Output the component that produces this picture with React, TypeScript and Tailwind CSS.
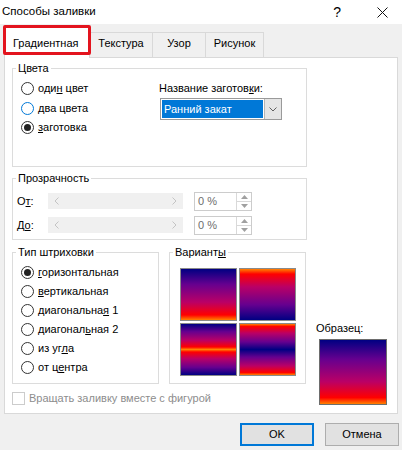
import type { ReactNode } from 'react';

const SUNSET =
  'bg-[linear-gradient(180deg,#000082_0%,#66008f_30%,#ba0066_65%,#ff0000_90%,#ff8200_100%)]';
const SUNSET_UP =
  'bg-[linear-gradient(0deg,#000082_0%,#66008f_30%,#ba0066_65%,#ff0000_90%,#ff8200_100%)]';
const SUNSET_MID =
  'bg-[linear-gradient(180deg,#000082_0%,#66008f_15%,#ba0066_32%,#ff0000_45%,#ff8200_50%,#ff0000_55%,#ba0066_68%,#66008f_85%,#000082_100%)]';
const SUNSET_EDGE =
  'bg-[linear-gradient(180deg,#ff8200_0%,#ff0000_5%,#ba0066_18%,#66008f_35%,#000082_50%,#66008f_65%,#ba0066_82%,#ff0000_95%,#ff8200_100%)]';

function Radio({ checked, hover, children }: { checked?: boolean; hover?: boolean; children: ReactNode }) {
  return (
    <div className="flex h-[19px] items-center gap-[4px]">
      <span
        className={
          hover
            ? 'flex h-[13px] w-[13px] items-center justify-center rounded-full border border-[#0078d7] bg-white'
            : 'flex h-[13px] w-[13px] items-center justify-center rounded-full border border-[#333333] bg-white'
        }
      >
        {checked && <span className="h-[7px] w-[7px] rounded-full bg-[#222222]" />}
      </span>
      <span>{children}</span>
    </div>
  );
}

function Group({ title, className, children }: { title: ReactNode; className: string; children: ReactNode }) {
  return (
    <fieldset className={`border border-[#dcdcdc] ${className}`}>
      <legend className="ml-[3px] px-[2px] leading-[14px]">{title}</legend>
      {children}
    </fieldset>
  );
}

// disabled scrollbar-style track with faded arrows
function Track() {
  return (
    <div className="flex h-[16px] w-[135px] items-center justify-between bg-[#f0f0f0] px-[6px]">
      <svg width="5" height="8" viewBox="0 0 5 8">
        <path d="M4.5 0.5 L1 4 L4.5 7.5" fill="none" stroke="#c4c4c4" strokeWidth="1" />
      </svg>
      <svg width="5" height="8" viewBox="0 0 5 8">
        <path d="M0.5 0.5 L4 4 L0.5 7.5" fill="none" stroke="#c4c4c4" strokeWidth="1" />
      </svg>
    </div>
  );
}

function Spin() {
  return (
    <div className="flex h-[19px] w-[58px] border border-[#cccccc] bg-white">
      <div className="flex flex-1 items-center pl-[3px] text-[#6d6d6d]">0 %</div>
      <div className="flex w-[15px] flex-col border-l border-[#d9d9d9]">
        <div className="flex flex-1 items-center justify-center border-b border-[#d9d9d9]">
          <svg width="7" height="4" viewBox="0 0 7 4">
            <path d="M0 4 L3.5 0 L7 4 Z" fill="#a0a0a0" />
          </svg>
        </div>
        <div className="flex flex-1 items-center justify-center">
          <svg width="7" height="4" viewBox="0 0 7 4">
            <path d="M0 0 L3.5 4 L7 0 Z" fill="#a0a0a0" />
          </svg>
        </div>
      </div>
    </div>
  );
}

function Swatch({ fill }: { fill: string }) {
  return (
    <div className="h-[53px] w-[57px] border border-[#8a8a8a]">
      <div className={`h-full w-full ${fill}`} />
    </div>
  );
}

export default function App() {
  return (
    <div className="flex h-[450px] w-[402px] flex-col bg-[#f0f0f0] font-['Liberation_Sans',Arial,sans-serif] text-[11px] text-black">
      {/* title bar */}
      <div className="flex h-[24px] items-center bg-white pl-[2px] pr-[14px] text-[11.5px]">
        <span className="flex-1">Способы заливки</span>
        <span className="mr-[36px] text-[14px]">?</span>
        <svg width="11" height="11" viewBox="0 0 11 11">
          <path d="M0.5 0.5 L10.5 10.5 M10.5 0.5 L0.5 10.5" stroke="#111" strokeWidth="1" />
        </svg>
      </div>

      {/* tabs */}
      <div className="flex h-[33px] items-end pl-[4px]">
        <div className="relative z-10 -mb-[1px] flex h-[32px] w-[86px] items-start border border-b-0 border-[#d9d9d9] bg-white pl-[8px] pt-[8px]">
          Градиентная
          <span className="absolute -left-[2px] -top-[2px] h-[30px] w-[88px] rounded-[2px] border-[3px] border-[#e3141e]" />
        </div>
        <div className="flex h-[25px] w-[63px] justify-center border border-b-0 border-l-0 border-[#d9d9d9] pt-[2px]">Текстура</div>
        <div className="flex h-[25px] w-[53px] justify-center border border-b-0 border-l-0 border-[#d9d9d9] pt-[2px]">Узор</div>
        <div className="flex h-[25px] w-[58px] justify-center border border-b-0 border-l-0 border-[#d9d9d9] pt-[2px]">Рисунок</div>
      </div>

      {/* tab page */}
      <div className="ml-[4px] flex h-[357px] w-[394px] flex-col border border-[#d9d9d9] bg-white pl-[7px] pt-[3px]">
        <Group title="Цвета" className="w-[295px]">
          <div className="flex h-[91px] pt-[3px]">
            <div className="flex w-[146px] flex-col pl-[8px]">
              <div className="h-[1px]" />
              <Radio>
                оди<u>н</u> цвет
              </Radio>
              <div className="h-[1px]" />
              <Radio hover>
                <u>д</u>ва цвета
              </Radio>
              <Radio checked>
                <u>з</u>аготовка
              </Radio>
            </div>
            <div className="flex flex-col">
              <div className="flex h-[19px] items-center pt-[1px]">
                Название заготов<u>к</u>и:
              </div>
              <div className="ml-[1px] mt-[1px] flex h-[22px] w-[122px] border border-[#9a9a9a] bg-white">
                <div className="flex-1 p-[1px]">
                  <div className="flex h-full items-center bg-[#0078d7] pl-[2px] text-white">Ранний закат</div>
                </div>
                <div className="flex w-[17px] items-center justify-center border-l border-[#b5b5b5] bg-[#e5e5e5]">
                  <svg width="8" height="5" viewBox="0 0 8 5">
                    <path d="M0.5 0.5 L4 4 L7.5 0.5" fill="none" stroke="#606060" strokeWidth="1" />
                  </svg>
                </div>
              </div>
            </div>
          </div>
        </Group>

        <Group title="Прозрачность" className="mt-[4px] w-[295px]">
          <div className="flex h-[54px] flex-col pl-[4px] pt-[4px]">
            <div className="flex h-[24px] items-center">
              <span className="w-[31px]">
                О<u>т</u>:
              </span>
              <Track />
              <div className="w-[11px]" />
              <Spin />
            </div>
            <div className="flex h-[24px] items-center">
              <span className="w-[31px]">
                Д<u>о</u>:
              </span>
              <Track />
              <div className="w-[11px]" />
              <Spin />
            </div>
          </div>
        </Group>

        <div className="mt-[5px] flex items-end">
          <div className="flex flex-col">
            <div className="flex gap-[10px]">
              <Group title="Тип штриховки" className="w-[147px]">
                <div className="flex h-[124px] flex-col pl-[8px] pt-[4px]">
                  <Radio checked>
                    <u>г</u>оризонтальная
                  </Radio>
                  <Radio>
                    <u>в</u>ертикальная
                  </Radio>
                  <Radio>
                    диагональна<u>я</u> 1
                  </Radio>
                  <Radio>
                    диагонал<u>ь</u>ная 2
                  </Radio>
                  <Radio>
                    из уг<u>л</u>а
                  </Radio>
                  <Radio>
                    от ц<u>е</u>нтра
                  </Radio>
                </div>
              </Group>
              <Group
                title={
                  <>
                    Вариант<u>ы</u>
                  </>
                }
                className="w-[137px]"
              >
                <div className="grid h-[124px] grid-cols-[57px_58px] content-start gap-[2px] pl-[10px] pt-[9px]">
                  <Swatch fill={SUNSET} />
                  <Swatch fill={SUNSET_UP} />
                  <Swatch fill={SUNSET_MID} />
                  <Swatch fill={SUNSET_EDGE} />
                </div>
              </Group>
            </div>
            <div className="mt-[8px] flex h-[13px] items-center gap-[4px] text-[#8d8d8d]">
              <span className="h-[13px] w-[13px] border border-[#cccccc] bg-white" />
              Вращать заливку вместе с фигурой
            </div>
          </div>
          <div className="ml-[10px] flex flex-col">
            <span className="leading-[14px]">Образец:</span>
            <div className="ml-[3px] mt-[4px] h-[66px] w-[68px] border border-[#6d6d6d]">
              <div className={`h-full w-full ${SUNSET}`} />
            </div>
          </div>
        </div>
      </div>

      {/* dialog buttons */}
      <div className="mt-[9px] flex justify-end gap-[11px] pr-[3px]">
        <button className="h-[23px] w-[74px] border-2 border-[#0078d7] bg-[#e1e1e1]">OK</button>
        <button className="h-[23px] w-[74px] border border-[#adadad] bg-[#e1e1e1]">Отмена</button>
      </div>
    </div>
  );
}
